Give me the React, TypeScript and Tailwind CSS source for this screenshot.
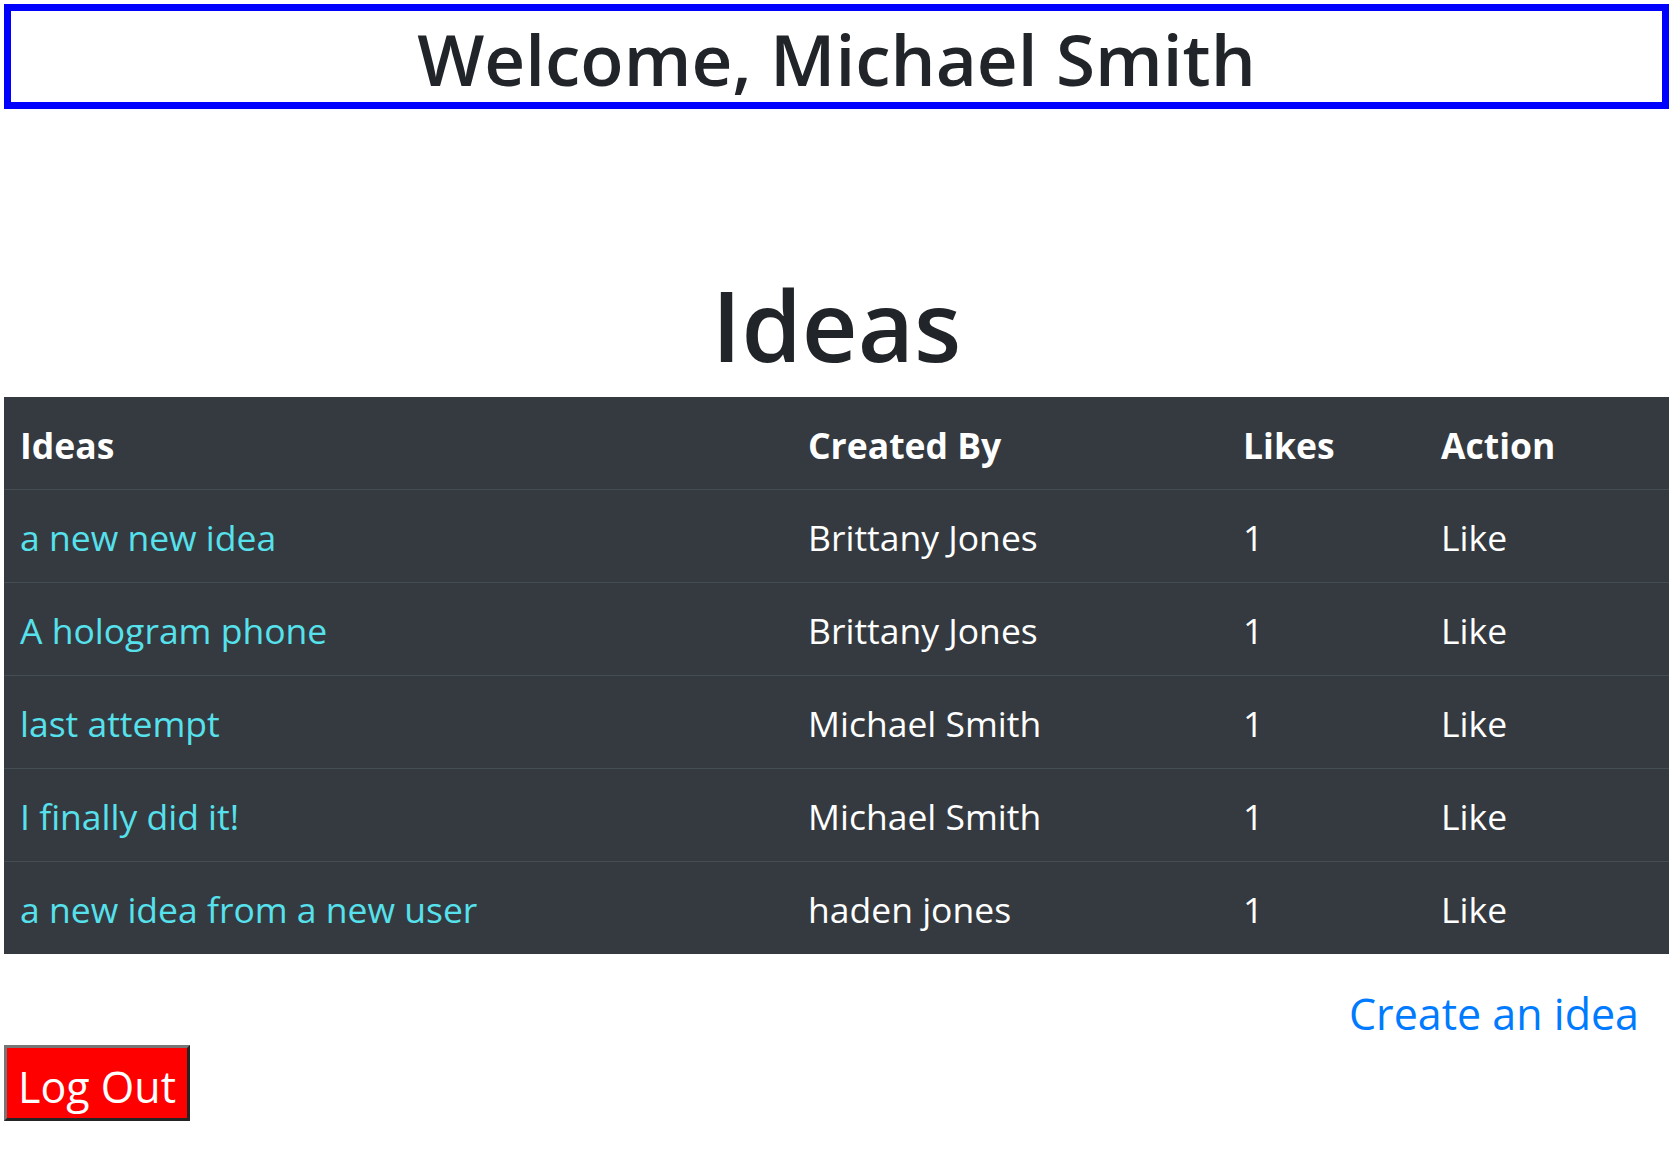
const ideas = [
  { title: "a new new idea", by: "Brittany Jones", likes: 1 },
  { title: "A hologram phone", by: "Brittany Jones", likes: 1 },
  { title: "last attempt", by: "Michael Smith", likes: 1 },
  { title: "I finally did it!", by: "Michael Smith", likes: 1 },
  { title: "a new idea from a new user", by: "haden jones", likes: 1 },
];

const cols = "grid grid-cols-[788px_435px_198px_1fr]";

export default function App() {
  return (
    <div className="min-h-screen bg-white pl-[4px] pr-[5px] pt-[4px] font-['Open_Sans',sans-serif] text-[#212529]">
      <div className="border-[7px] border-[#0000ff]">
        <h1 className="h-[91px] text-center text-[71px] font-semibold leading-[91px] pt-[2px]">
          Welcome, Michael Smith
        </h1>
      </div>

      <h1 className="mt-[163px] mb-[20px] text-center text-[97px] font-semibold leading-[105px]">
        Ideas
      </h1>

      <div className="bg-[#343a40] text-[35.5px] text-white">
        <div className={`${cols} h-[92px] items-center pt-[5px] font-bold`}>
          <div className="px-[16px]">Ideas</div>
          <div className="px-[16px]">Created By</div>
          <div className="px-[16px]">Likes</div>
          <div className="px-[16px]">Action</div>
        </div>
        {ideas.map((idea) => (
          <div
            key={idea.title}
            className={`${cols} h-[93px] items-center border-t border-[#454d55] pt-[4px]`}
          >
            <div className="px-[16px]">
              <a href="#" className="text-[#56e1ec]">
                {idea.title}
              </a>
            </div>
            <div className="px-[16px]">{idea.by}</div>
            <div className="px-[16px]">{idea.likes}</div>
            <div className="px-[16px]">Like</div>
          </div>
        ))}
      </div>

      <div className="flex justify-end pr-[30px] pt-[28px]">
        <a href="#" className="text-[43px] leading-[63px] text-[#007bff]">
          Create an idea
        </a>
      </div>

      <button
        type="button"
        className="h-[76px] w-[186px] border-[3px] border-t-[#767676] border-l-[#767676] border-b-[#242424] border-r-[#242424] bg-[#ff0000] pt-[7px] text-[43px] leading-[63px] text-white"
      >
        Log Out
      </button>
    </div>
  );
}
